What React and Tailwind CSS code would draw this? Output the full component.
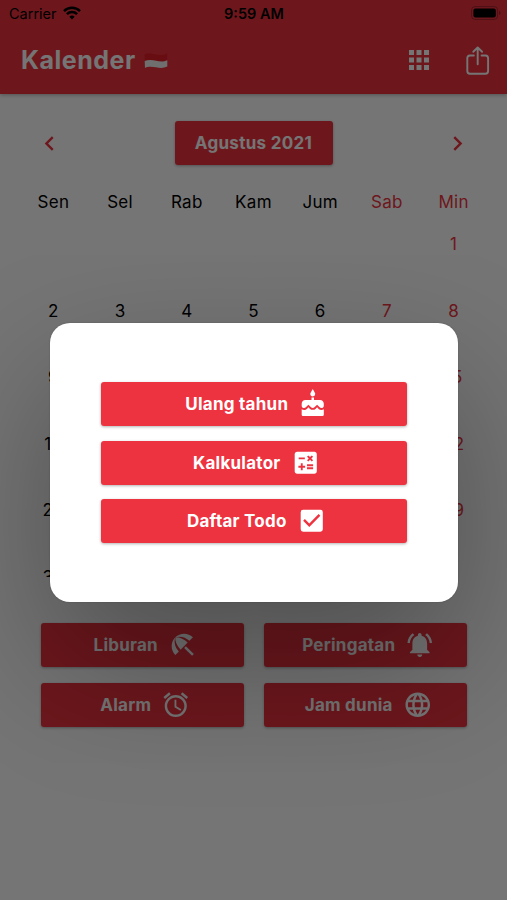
import {
  MdAlarm,
  MdApps,
  MdCake,
  MdCalculate,
  MdCheckBox,
  MdChevronLeft,
  MdChevronRight,
  MdLanguage,
  MdNotificationsActive,
} from 'react-icons/md'

const WEEKDAYS = ['Sen', 'Sel', 'Rab', 'Kam', 'Jum', 'Sab', 'Min']

// August 2021 starts on a Sunday
const DAYS = [...Array(6).fill(null), ...Array.from({ length: 31 }, (_, i) => i + 1)]

const PAGE_ACTIONS = [
  { label: 'Liburan', icon: UmbrellaIcon },
  { label: 'Peringatan', icon: MdNotificationsActive },
  { label: 'Alarm', icon: MdAlarm },
  { label: 'Jam dunia', icon: MdLanguage },
]

const MENU_ACTIONS = [
  { label: 'Ulang tahun', icon: MdCake },
  { label: 'Kalkulator', icon: MdCalculate },
  { label: 'Daftar Todo', icon: MdCheckBox },
]

// Beach umbrella with all three canopy panels
function UmbrellaIcon({ className }) {
  return (
    <svg viewBox="0 0 24 24" className={className} fill="currentColor">
      <path d="M13.127 14.56l1.430-1.430 6.440 6.443L19.570 21z" />
      <path d="M17.420 8.830l2.860-2.860c-3.950-3.950-10.350-3.960-14.300-.020 3.930-1.300 8.310-.250 11.440 2.880z" />
      <path d="M5.950 5.980c-3.940 3.950-3.930 10.350.020 14.300l2.860-2.860C5.700 14.290 4.650 9.910 5.950 5.980z" />
      <path d="M5.970 5.960l-.010.010c-.380 3.010 1.170 6.880 4.300 10.020l5.730-5.730c-3.130-3.130-7.010-4.680-10.020-4.300z" />
    </svg>
  )
}

function ActionButton({ label, icon: Icon }) {
  return (
    <button
      type="button"
      className="flex h-11 w-full items-center justify-center gap-[10px] rounded-[3px] bg-[#ee3340] pl-[6px] text-[17px] font-bold tracking-[0.25px] text-white shadow-[0_1px_3px_rgba(0,0,0,0.3)]"
    >
      <span className="pt-0.5">{label}</span>
      <Icon className="size-[29.500px] shrink-0" />
    </button>
  )
}

function WifiIcon() {
  return (
    <svg viewBox="0 0 18 14" className="mb-0.5 h-[14px] w-[18px]" fill="none" stroke="black" strokeWidth="2.5">
      <path d="M1 5.1a11.4 11.4 0 0 1 16 0" />
      <path d="M3.9 8.2a7.2 7.2 0 0 1 10.2 0" />
      <path d="M9 13.6 6.3 10.8a3.8 3.8 0 0 1 5.4 0z" fill="black" stroke="none" />
    </svg>
  )
}

function BatteryIcon() {
  return (
    <svg viewBox="0 0 30 14" className="mb-0.5 h-[14px] w-[30px]">
      <rect x="0.6" y="0.6" width="26" height="12.8" rx="3.4" fill="none" stroke="black" strokeOpacity="0.3" strokeWidth="1" />
      <rect x="2.4" y="2.4" width="22.4" height="9.2" rx="2" fill="black" />
      <path d="M28 4.8v4.4c1-.4 1.6-1.2 1.6-2.2S29 5.2 28 4.8z" fill="black" fillOpacity="0.3" />
    </svg>
  )
}

function FlagIcon() {
  return (
    <svg viewBox="0 0 24 17" className="h-[17px] w-6">
      <path d="M.5 2C4 .6 7.5 1.4 12 2.3S20 3 23.3 1v7.2c-4 1.8-7.5 1.3-11.3.5S4 7.6.7 9z" fill="#e3202b" />
      <path d="M.7 9C4 7.6 8.2 7.9 12 8.7s7.3 1.3 11.3-.5v6.4c-4 1.8-7.5 1.4-11.3.7S4 14.3 1 15.9z" fill="#f1f1f1" />
    </svg>
  )
}

function ShareIcon() {
  return (
    <svg viewBox="0 0 24 30" className="h-[30px] w-6" fill="none" stroke="white" strokeWidth="1.9" strokeLinecap="round" strokeLinejoin="round">
      <path d="M7.8 9.5H4A2.8 2.8 0 0 0 1.300 12.300v12.700a2.800 2.800 0 0 0 2.700 2.800h15.400a2.800 2.800 0 0 0 2.700-2.800V12.300a2.800 2.800 0 0 0-2.700-2.800H15.600" />
      <path d="M11.7 18.3V2M7.3 5.8 11.7 1.5 16.1 5.8" />
    </svg>
  )
}

function Header() {
  return (
    <header className="flex h-[94px] shrink-0 flex-col bg-[#ee3340] shadow-[0_1px_4px_rgba(0,0,0,0.3)]">
      <div className="grid h-[28px] grid-cols-3 items-center pr-1.5 pl-[9px] text-[14.500px] text-black">
        <div className="flex items-center gap-1.5">
          <span>Carrier</span>
          <WifiIcon />
        </div>
        <span className="pr-0.5 text-center font-semibold">9:59 AM</span>
        <div className="flex justify-end">
          <BatteryIcon />
        </div>
      </div>
      <div className="flex flex-1 items-center justify-between pr-[17px] pb-px pl-[21px] text-white">
        <h1 className="flex items-center gap-2 text-[25px] font-bold tracking-[0.5px]">
          Kalender <FlagIcon />
        </h1>
        <div className="flex items-center gap-8">
          <MdApps className="mb-0.5 size-[30px]" />
          <ShareIcon />
        </div>
      </div>
    </header>
  )
}

function Calendar() {
  return (
    <section className="h-[387px] overflow-hidden px-5 text-[17px] tracking-[0.3px]">
      <div className="grid grid-cols-7 text-center">
        {WEEKDAYS.map((name, i) => (
          <span key={name} className={`h-[42px] leading-6 ${i > 4 ? 'text-[#ee3340]' : 'text-black'}`}>
            {name}
          </span>
        ))}
        {DAYS.map((day, i) => (
          <span key={i} className={`h-[66.500px] leading-6 ${i % 7 > 4 ? 'text-[#ee3340]' : 'text-black'}`}>
            {day}
          </span>
        ))}
      </div>
    </section>
  )
}

export default function App() {
  return (
    <div className="relative flex h-[900px] w-[507px] flex-col overflow-hidden bg-white font-['Inter',sans-serif]">
      <Header />

      {/* Month switcher */}
      <div className="mt-[27px] flex h-11 items-center justify-between px-[35px] text-[#ee3340]">
        <MdChevronLeft className="size-[29px]" />
        <button
          type="button"
          className="h-11 w-[158px] rounded-[3px] bg-[#ee3340] pt-0.5 text-[17px] font-bold tracking-[0.3px] text-white shadow-[0_1px_3px_rgba(0,0,0,0.3)]"
        >
          Agustus 2021
        </button>
        <MdChevronRight className="size-[29px]" />
      </div>

      <div className="mt-[25px]">
        <Calendar />
      </div>

      <div className="mt-[46px] grid grid-cols-2 gap-x-5 gap-y-4 pr-10 pl-[41px]">
        {PAGE_ACTIONS.map((action) => (
          <ActionButton key={action.label} {...action} />
        ))}
      </div>

      {/* Modal */}
      <div className="absolute inset-0 flex items-start justify-center bg-black/54 pt-[323px]">
        <div
          role="dialog"
          className="flex h-[279px] w-[408px] flex-col justify-center gap-[14.700px] rounded-[20px] bg-white px-[51px] shadow-[0_0_2px_rgba(0,0,0,0.2),0_60px_140px_rgba(0,0,0,0.32)]"
        >
          {MENU_ACTIONS.map((action) => (
            <ActionButton key={action.label} {...action} />
          ))}
        </div>
      </div>
    </div>
  )
}
